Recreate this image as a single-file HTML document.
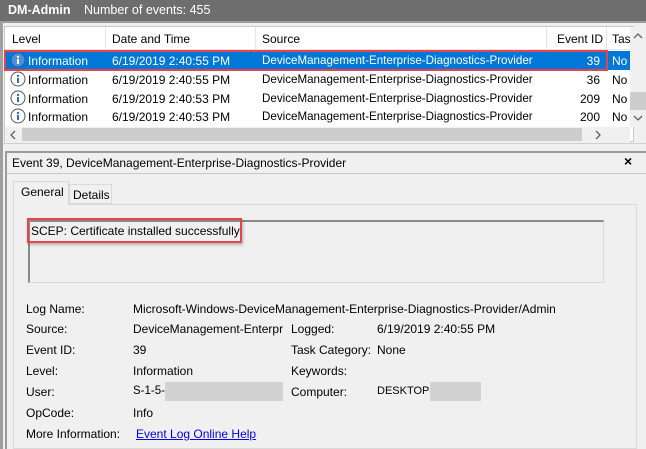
<!DOCTYPE html>
<html><head><style>
*{margin:0;padding:0;box-sizing:border-box}
body{width:646px;height:449px;overflow:hidden;background:#f0f0f0;font-family:"Liberation Sans",sans-serif;font-size:12px;color:#000;position:relative}
.a{position:absolute;white-space:nowrap}
</style></head><body>
<div class="a" style="left:0;top:0;width:646px;height:21px;background:#6e6e6e"></div>
<div class="a" style="left:8px;top:3px;color:#fff;font-weight:bold;font-size:12.5px">DM-Admin</div>
<div class="a" style="left:84px;top:3px;color:#fff;font-size:12.5px">Number of events: 455</div>
<div class="a" style="left:0;top:21px;width:646px;height:2px;background:#9c9c9c"></div>
<div class="a" style="left:0;top:21px;width:3px;height:428px;background:#a0a0a0"></div>
<!-- list -->
<div class="a" style="left:4px;top:26px;width:630px;height:116px;background:#fff;border:1px solid #c8c8c8"></div>
<div class="a" style="left:5px;top:27px;width:625px;height:23px;background:#fff;border-bottom:1px solid #e5e5e5"></div>
<div class="a" style="left:105px;top:27px;width:1px;height:23px;background:#e5e5e5"></div>
<div class="a" style="left:255px;top:27px;width:1px;height:23px;background:#e5e5e5"></div>
<div class="a" style="left:546px;top:27px;width:1px;height:23px;background:#e5e5e5"></div>
<div class="a" style="left:606px;top:27px;width:1px;height:23px;background:#e5e5e5"></div>
<div class="a" style="left:12px;top:32px">Level</div>
<div class="a" style="left:112px;top:32px">Date and Time</div>
<div class="a" style="left:262px;top:32px">Source</div>
<div class="a" style="left:557px;top:32px">Event ID</div>
<div class="a" style="left:612px;top:32px;width:18px;overflow:hidden">Task</div>
<div class="a" style="left:5px;top:51px;width:625px;height:19px;background:#0078d7"></div>
<div class="a" style="left:4px;top:50px;width:604px;height:21px;border:2px solid #e8424a"></div>
<svg class="a" style="left:10px;top:52px" width="16" height="16"><circle cx="8" cy="8" r="7" fill="#4a8fd8" stroke="#2a5f9e"/><rect x="7" y="7" width="2" height="5" fill="#fff"/><circle cx="8" cy="5" r="1.2" fill="#fff"/></svg>
<div class="a" style="left:28px;top:54px;color:#fff">Information</div>
<div class="a" style="left:112px;top:54px;color:#fff">6/19/2019 2:40:55 PM</div>
<div class="a" style="left:262px;top:54px;color:#fff;font-size:11.6px">DeviceManagement-Enterprise-Diagnostics-Provider</div>
<div class="a" style="left:560px;top:54px;width:40px;text-align:right;color:#fff">39</div>
<div class="a" style="left:612px;top:54px;color:#fff">No</div>
<svg class="a" style="left:10px;top:71px" width="16" height="16"><circle cx="8" cy="8" r="7" fill="#fff" stroke="#555"/><rect x="7" y="7" width="2" height="5" fill="#3a6fb8"/><circle cx="8" cy="5" r="1.2" fill="#3a6fb8"/></svg>
<div class="a" style="left:28px;top:73px">Information</div>
<div class="a" style="left:112px;top:73px">6/19/2019 2:40:55 PM</div>
<div class="a" style="left:262px;top:73px;font-size:11.6px">DeviceManagement-Enterprise-Diagnostics-Provider</div>
<div class="a" style="left:560px;top:73px;width:40px;text-align:right">36</div>
<div class="a" style="left:612px;top:73px">No</div>
<svg class="a" style="left:10px;top:90px" width="16" height="16"><circle cx="8" cy="8" r="7" fill="#fff" stroke="#555"/><rect x="7" y="7" width="2" height="5" fill="#3a6fb8"/><circle cx="8" cy="5" r="1.2" fill="#3a6fb8"/></svg>
<div class="a" style="left:28px;top:92px">Information</div>
<div class="a" style="left:112px;top:92px">6/19/2019 2:40:53 PM</div>
<div class="a" style="left:262px;top:92px;font-size:11.6px">DeviceManagement-Enterprise-Diagnostics-Provider</div>
<div class="a" style="left:560px;top:92px;width:40px;text-align:right">209</div>
<div class="a" style="left:612px;top:92px">No</div>
<svg class="a" style="left:10px;top:108px" width="16" height="16"><circle cx="8" cy="8" r="7" fill="#fff" stroke="#555"/><rect x="7" y="7" width="2" height="5" fill="#3a6fb8"/><circle cx="8" cy="5" r="1.2" fill="#3a6fb8"/></svg>
<div class="a" style="left:28px;top:110px">Information</div>
<div class="a" style="left:112px;top:110px">6/19/2019 2:40:53 PM</div>
<div class="a" style="left:262px;top:110px;font-size:11.6px">DeviceManagement-Enterprise-Diagnostics-Provider</div>
<div class="a" style="left:560px;top:110px;width:40px;text-align:right">200</div>
<div class="a" style="left:612px;top:110px">No</div>
<!-- v scrollbar -->
<div class="a" style="left:630px;top:27px;width:16px;height:100px;background:#f0f0f0"></div>
<svg class="a" style="left:633px;top:32px" width="10" height="8"><path d="M1 6 L5 2 L9 6" fill="none" stroke="#606060" stroke-width="1.3"/></svg>
<div class="a" style="left:630px;top:92px;width:16px;height:18px;background:#cdcdcd"></div>
<svg class="a" style="left:633px;top:114px" width="10" height="8"><path d="M1 2 L5 6 L9 2" fill="none" stroke="#606060" stroke-width="1.3"/></svg>
<!-- h scrollbar -->
<div class="a" style="left:5px;top:127px;width:625px;height:15px;background:#f0f0f0"></div>
<svg class="a" style="left:9px;top:130px" width="8" height="10"><path d="M6 1 L2 5 L6 9" fill="none" stroke="#606060" stroke-width="1.3"/></svg>
<div class="a" style="left:22px;top:128px;width:560px;height:13px;background:#cdcdcd"></div>
<svg class="a" style="left:594px;top:130px" width="8" height="10"><path d="M2 1 L6 5 L2 9" fill="none" stroke="#606060" stroke-width="1.3"/></svg>
<div class="a" style="left:3px;top:143px;width:643px;height:1px;background:#d0d0d0"></div>
<!-- detail -->
<div class="a" style="left:5px;top:151px;width:641px;height:298px;border-left:2px solid #9c9c9c;border-top:2px solid #9c9c9c;background:#f0f0f0"></div>
<div class="a" style="left:12px;top:156px">Event 39, DeviceManagement-Enterprise-Diagnostics-Provider</div>
<div class="a" style="left:624px;top:153px;font-weight:bold;font-size:14px">&#215;</div>
<div class="a" style="left:7px;top:173px;width:639px;height:1px;background:#c8c8c8"></div>
<div class="a" style="left:13px;top:204px;width:624px;height:245px;border:1px solid #d9d9d9;background:#f0f0f0"></div>
<div class="a" style="left:13px;top:181px;width:56px;height:24px;background:#f0f0f0;border:1px solid #d9d9d9;border-bottom:none"></div>
<div class="a" style="left:21px;top:185px">General</div>
<div class="a" style="left:69px;top:184px;width:43px;height:20px;background:#f0f0f0;border:1px solid #d9d9d9"></div>
<div class="a" style="left:73px;top:188px">Details</div>
<div class="a" style="left:28px;top:220px;width:576px;height:63px;border:1px solid #dadada;border-top:2px solid #8a8a8a;border-left:2px solid #8a8a8a"></div>
<div class="a" style="left:31px;top:224px">SCEP: Certificate installed successfully.</div>
<div class="a" style="left:27px;top:218px;width:215px;height:25px;border:2px solid #e8424a;box-shadow:1px 2px 3px rgba(0,0,0,.25)"></div>
<div class="a" style="left:26px;top:302px">Log Name:</div>
<div class="a" style="left:133px;top:302px">Microsoft-Windows-DeviceManagement-Enterprise-Diagnostics-Provider/Admin</div>
<div class="a" style="left:26px;top:322px">Source:</div>
<div class="a" style="left:133px;top:322px">DeviceManagement-Enterpr</div>
<div class="a" style="left:291px;top:322px">Logged:</div>
<div class="a" style="left:377px;top:322px">6/19/2019 2:40:55 PM</div>
<div class="a" style="left:26px;top:343px">Event ID:</div>
<div class="a" style="left:133px;top:343px">39</div>
<div class="a" style="left:291px;top:343px">Task Category:</div>
<div class="a" style="left:377px;top:343px">None</div>
<div class="a" style="left:26px;top:364px">Level:</div>
<div class="a" style="left:133px;top:364px">Information</div>
<div class="a" style="left:291px;top:364px">Keywords:</div>
<div class="a" style="left:26px;top:385px">User:</div>
<div class="a" style="left:133px;top:385px;font-size:11.5px">S-1-5-</div>
<div class="a" style="left:165px;top:382px;width:118px;height:19px;background:#d2d2d2"></div>
<div class="a" style="left:291px;top:385px">Computer:</div>
<div class="a" style="left:377px;top:385px;font-size:11px">DESKTOP-</div>
<div class="a" style="left:430px;top:382px;width:51px;height:19px;background:#d2d2d2"></div>
<div class="a" style="left:26px;top:406px">OpCode:</div>
<div class="a" style="left:133px;top:406px">Info</div>
<div class="a" style="left:26px;top:427px">More Information:</div>
<div class="a" style="left:136px;top:427px;color:#0000ee;text-decoration:underline">Event Log Online Help</div>
</body></html>
